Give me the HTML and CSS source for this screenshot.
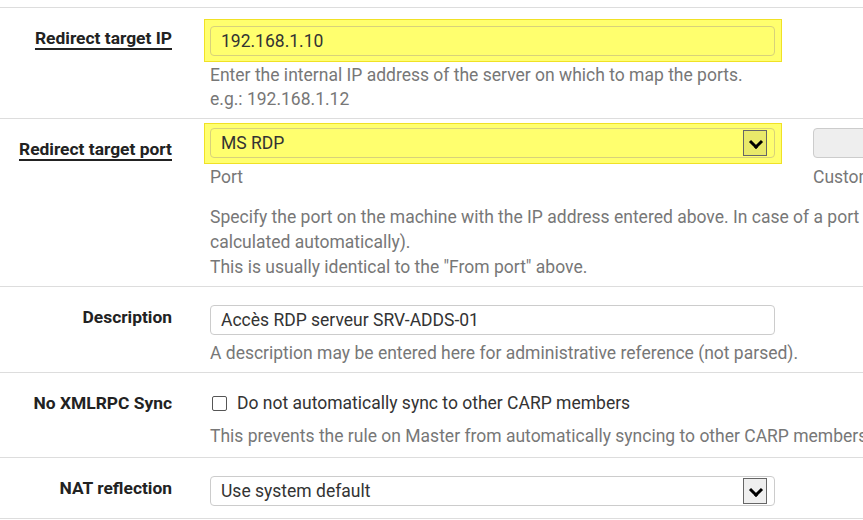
FILE: index.html
```html
<!DOCTYPE html>
<html lang="en">

<head>
    <meta charset="UTF-8">
    <meta name="viewport" content="width=device-width, initial-scale=1.0">
    <title>Port Forward</title>
    <link rel="stylesheet" href="styles.css">
</head>

<body>
    <div class="form">
        <div class="row">
            <div class="label"><span class="link">Redirect target IP</span></div>
            <div class="field">
                <div class="input marked">192.168.1.10</div>
                <div class="help">Enter the internal IP address of the server on which to map the ports.<br>e.g.: 192.168.1.12</div>
            </div>
        </div>

        <div class="row row-port">
            <div class="label"><span class="link">Redirect target port</span></div>
            <div class="field field-top">
                <div class="cols">
                    <div class="col">
                        <div class="input select marked marked-tight">MS RDP<span class="arrow"></span></div>
                        <div class="help">Port</div>
                    </div>
                    <div class="col col-custom">
                        <div class="input disabled"></div>
                        <div class="help">Custom</div>
                    </div>
                </div>
                <div class="help help-block">Specify the port on the machine with the IP address entered above. In case of a port range, specify the beginning port of the range (the end port will be<br>calculated automatically).<br>This is usually identical to the "From port" above.</div>
            </div>
        </div>

        <div class="row">
            <div class="label">Description</div>
            <div class="field">
                <div class="input">Accès RDP serveur SRV-ADDS-01</div>
                <div class="help help-desc">A description may be entered here for administrative reference (not parsed).</div>
            </div>
        </div>

        <div class="row row-sync">
            <div class="label">No XMLRPC Sync</div>
            <div class="field">
                <div class="check"><span class="box"></span>Do not automatically sync to other CARP members</div>
                <div class="help help-check">This prevents the rule on Master from automatically syncing to other CARP members</div>
            </div>
        </div>

        <div class="row row-last">
            <div class="label">NAT reflection</div>
            <div class="field">
                <div class="input select">Use system default<span class="arrow"></span></div>
            </div>
        </div>
    </div>
</body>

</html>
```

FILE: styles.css
```css
* {
    margin: 0;
    padding: 0;
    box-sizing: border-box;
}

body {
    background: #fff;
    font-family: Roboto, "Liberation Sans", sans-serif;
    color: #333;
    overflow: hidden;
}

.form {
    width: 1200px;
    padding-top: 7px;
}

.row {
    display: flex;
    border-top: 1px solid #ddd;
    padding-bottom: 7px;
}

.row-port {
    padding-bottom: 6px;
}

.row-sync {
    padding-bottom: 9px;
}

.row-last {
    padding-bottom: 12px;
    border-bottom: 1px solid #ddd;
}

.label {
    width: 172px;
    flex-shrink: 0;
    padding-top: 18px;
    text-align: right;
    font-size: 17.4px;
    font-weight: bold;
    line-height: 24px;
    color: #222;
}

.link {
    text-decoration: underline;
    text-decoration-thickness: 1.5px;
    text-underline-offset: 4px;
}

.field {
    margin-left: 38px;
    padding-top: 18px;
    flex: 1;
}

.field-top {
    padding-top: 9px;
}

.input {
    position: relative;
    width: 565px;
    height: 30px;
    border: 1px solid #ccc;
    border-radius: 4px;
    padding: 0 10px;
    font-size: 17.5px;
    line-height: 28px;
    color: #333;
    background: #fff;
    white-space: nowrap;
}

.marked {
    background: #ffff6e;
    border-color: #d8d27a;
}

/* highlight box drawn round the field */
.marked::before {
    content: "";
    position: absolute;
    left: -7px;
    right: -8px;
    top: -8px;
    bottom: -7px;
    z-index: -1;
    background: #ffff6e;
    border: 1.5px solid #f0e126;
}

.marked-tight::before {
    top: -6px;
}

.select .arrow {
    position: absolute;
    right: 7px;
    top: 1px;
    width: 24px;
    height: 26px;
    border: 1px solid #666;
    background: #efefef;
}

.marked .arrow {
    background: #e9e96a;
}

.select .arrow::after {
    content: "";
    position: absolute;
    left: 6.5px;
    top: 5.5px;
    width: 7px;
    height: 7px;
    border-right: 3px solid #000;
    border-bottom: 3px solid #000;
    transform: rotate(45deg);
}

.disabled {
    width: 120px;
    background: #eee;
}

.cols {
    display: flex;
}

.col-custom {
    margin-left: 38px;
}

.help {
    margin-top: 7px;
    font-size: 17.5px;
    line-height: 24px;
    color: #777;
    white-space: nowrap;
}

.help-block {
    margin-top: 16px;
    line-height: 25px;
}

.help-desc {
    margin-top: 6px;
}

.check {
    display: flex;
    align-items: center;
    font-size: 17.5px;
    line-height: 24px;
    color: #333;
}

.box {
    width: 15px;
    height: 15px;
    margin: 0 10px 0 2px;
    border: 1px solid #555;
    border-radius: 2px;
    background: #fff;
}

.help-check {
    margin-top: 9px;
}
```
